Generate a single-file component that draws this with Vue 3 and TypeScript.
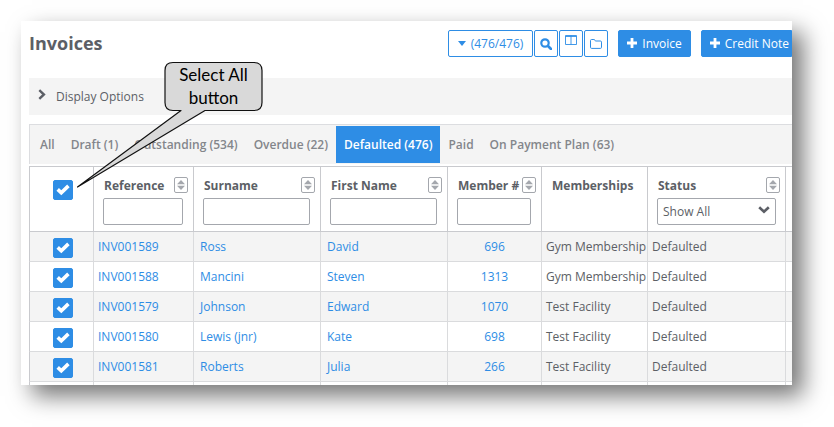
<script setup lang="ts">
import { reactive, ref } from 'vue'

interface Invoice {
  reference: string
  surname: string
  firstName: string
  member: string
  membership: string
  status: string
  selected: boolean
}

const tabs = ['All', 'Draft (1)', 'Outstanding (534)', 'Overdue (22)', 'Defaulted (476)', 'Paid', 'On Payment Plan (63)']
const activeTab = ref('Defaulted (476)')
const allSelected = ref(true)

const invoices = reactive<Invoice[]>([
  { reference: 'INV001589', surname: 'Ross', firstName: 'David', member: '696', membership: 'Gym Membership', status: 'Defaulted', selected: true },
  { reference: 'INV001588', surname: 'Mancini', firstName: 'Steven', member: '1313', membership: 'Gym Membership', status: 'Defaulted', selected: true },
  { reference: 'INV001579', surname: 'Johnson', firstName: 'Edward', member: '1070', membership: 'Test Facility', status: 'Defaulted', selected: true },
  { reference: 'INV001580', surname: 'Lewis (jnr)', firstName: 'Kate', member: '698', membership: 'Test Facility', status: 'Defaulted', selected: true },
  { reference: 'INV001581', surname: 'Roberts', firstName: 'Julia', member: '266', membership: 'Test Facility', status: 'Defaulted', selected: true },
])

const columns = [
  { label: 'Reference', filter: 'text' },
  { label: 'Surname', filter: 'text' },
  { label: 'First Name', filter: 'text' },
  { label: 'Member #', filter: 'text' },
  { label: 'Memberships', filter: 'none' },
  { label: 'Status', filter: 'select' },
]

function toggleAll(): void {
  invoices.forEach((i) => (i.selected = allSelected.value))
}
</script>

<template>
  <main class="card">
    <header class="top">
      <h1>Invoices</h1>
      <div class="tools">
        <button class="btn count" type="button">
          <svg width="8" height="5" viewBox="0 0 8 5"><path d="M0 0h8L4 5z" fill="currentColor" /></svg>
          (476/476)
        </button>
        <button class="btn icon" type="button" aria-label="Search">
          <svg width="12" height="12" viewBox="0 0 12 12" fill="none" stroke="currentColor">
            <circle cx="5" cy="5" r="3.7" stroke-width="2.2" />
            <path d="M8 8l3 3" stroke-width="2.6" stroke-linecap="round" />
          </svg>
        </button>
        <button class="btn icon columns" type="button" aria-label="Columns">
          <svg width="12" height="11" viewBox="0 0 12 11" fill="none" stroke="currentColor">
            <path d="M.5 .5h11v9H.5zM6 .5v9M.5 1.5h11" stroke-width=".9" />
          </svg>
        </button>
        <button class="btn icon" type="button" aria-label="Folder">
          <svg width="12" height="10" viewBox="0 0 12 10" fill="none" stroke="currentColor">
            <path d="M.5 1.6Q.5.5 1.6.5h2.3Q4.8.5 4.9 1.3 5 2 5.8 2h4.6q1.1 0 1.1 1.1v5.2q0 1.1-1.1 1.1H1.6Q.5 9.400 .5 8.300z" />
          </svg>
        </button>
        <button class="btn primary" type="button">
          <svg width="10" height="10" viewBox="0 0 10 10"><path d="M3.600 0h2.800v3.600H10v2.800H6.400V10H3.600V6.400H0V3.600h3.600z" fill="currentColor" /></svg>
          Invoice
        </button>
        <button class="btn primary last" type="button">
          <svg width="10" height="10" viewBox="0 0 10 10"><path d="M3.600 0h2.800v3.600H10v2.800H6.400V10H3.600V6.400H0V3.600h3.600z" fill="currentColor" /></svg>
          Credit Note
        </button>
      </div>
    </header>

    <button class="options" type="button">
      <svg width="8" height="12" viewBox="0 0 8 12" fill="none"><path d="M1.300 1.200L5.900 5.500 1.300 9.800" stroke="currentColor" stroke-width="2.400" /></svg>
      <span>Display Options</span>
    </button>

    <nav class="tabs">
      <a v-for="t in tabs" :key="t" href="#" :class="{ active: t === activeTab }" @click.prevent="activeTab = t">{{ t }}</a>
    </nav>

    <table>
      <colgroup>
        <col class="c-check" />
        <col class="c-ref" />
        <col class="c-name" />
        <col class="c-name" />
        <col class="c-member" />
        <col class="c-plan" />
        <col class="c-status" />
        <col />
      </colgroup>
      <thead>
        <tr>
          <th class="pick">
            <label class="tick">
              <input v-model="allSelected" type="checkbox" aria-label="Select all" @change="toggleAll" />
              <svg viewBox="0 0 20 20"><path d="M4.700 9.400l3.600 3.400L15.400 5.900" /></svg>
            </label>
          </th>
          <th v-for="c in columns" :key="c.label">
            <div class="head">
              <span>{{ c.label }}</span>
              <button v-if="c.filter !== 'none'" class="sort" type="button" :aria-label="'Sort by ' + c.label">
                <svg width="8" height="10" viewBox="0 0 8 10"><path d="M4 0l4 4.300H0zM0 5.700h8L4 10z" fill="currentColor" /></svg>
              </button>
            </div>
            <input v-if="c.filter === 'text'" class="field" type="text" :aria-label="'Filter ' + c.label" />
            <div v-if="c.filter === 'select'" class="pickone">
              <select class="field" aria-label="Filter status"><option>Show All</option></select>
              <svg width="12" height="8" viewBox="0 0 12 8" fill="none"><path d="M1.200 1.200L6 5.800l4.800-4.600" stroke="currentColor" stroke-width="2.600" /></svg>
            </div>
          </th>
          <th></th>
        </tr>
      </thead>
      <tbody>
        <tr v-for="i in invoices" :key="i.reference">
          <td class="pick">
            <label class="tick">
              <input v-model="i.selected" type="checkbox" :aria-label="'Select ' + i.reference" />
              <svg viewBox="0 0 20 20"><path d="M4.700 9.400l3.600 3.400L15.400 5.900" /></svg>
            </label>
          </td>
          <td><a href="#">{{ i.reference }}</a></td>
          <td class="name"><a href="#">{{ i.surname }}</a></td>
          <td class="name"><a href="#">{{ i.firstName }}</a></td>
          <td class="member"><a href="#">{{ i.member }}</a></td>
          <td>{{ i.membership }}</td>
          <td>{{ i.status }}</td>
          <td></td>
        </tr>
        <tr class="stub"><td v-for="n in 8" :key="n"></td></tr>
      </tbody>
    </table>

    <aside class="callout">
      <svg width="200" height="136" viewBox="0 0 200 136">
        <path
          d="M104 3.500h81q8 0 8 8v32q0 8-8 8H136L8.500 128 112 51.500H104q-8 0-8-8v-32q0-8 8-8z"
          fill="#d9d9d9" stroke="#111" stroke-width="1.200" stroke-linejoin="round"
        />
      </svg>
      <p>Select All<br />button</p>
    </aside>
  </main>
</template>

<style>
body {
  background: #fff;
}
</style>

<style scoped>
.card {
  position: relative;
  margin: 21px 42px 42px 21px;
  padding-left: 8px;
  overflow: hidden;
  background: #fff;
  box-shadow: 11px 11px 22px rgba(0, 0, 0, 0.54);
  color: #5c5f66;
  font: 12px/18px "Open Sans", sans-serif;
}
button,
input,
select {
  box-sizing: border-box;
  margin: 0;
  font: inherit;
  color: inherit;
}
a {
  color: #2e8de5;
  text-decoration: none;
}
.top {
  display: flex;
  justify-content: space-between;
  padding-top: 9px;
  height: 48px;
}
h1 {
  margin: 0;
  font-size: 18px;
  line-height: 26px;
  font-weight: 700;
}
.tools {
  display: flex;
  gap: 1px;
}
.btn {
  display: flex;
  align-items: center;
  justify-content: center;
  gap: 5px;
  height: 27px;
  padding: 0 9px;
  border: 1px solid #2e8de5;
  border-radius: 2px;
  background: #fff;
  color: #2e8de5;
  white-space: nowrap;
}
.icon {
  width: 24px;
  padding: 0;
}
.columns {
  align-items: flex-start;
  padding-top: 4px;
}
.primary {
  margin-left: 9px;
  padding: 0 8px;
  background: #2e8de5;
  color: #fff;
}
.primary svg {
  margin-bottom: 2px;
}
.last {
  padding-right: 2px;
  border-radius: 2px 0 0 2px;
}
.options {
  display: flex;
  align-items: center;
  gap: 10px;
  width: 100%;
  height: 37px;
  margin-bottom: 9px;
  padding: 0 9px;
  border: 0;
  background: #f4f4f4;
}
.options svg {
  margin-bottom: 4px;
}
.tabs {
  display: flex;
  margin-bottom: 2px;
  padding: 1px 0 1px 2px;
  border-top: 1px solid #dcdde0;
  border-left: 1px solid #dcdde0;
  background: #f4f4f4;
}
.tabs a {
  padding: 0 8px;
  line-height: 37px;
  font-weight: 600;
  color: #83868b;
  white-space: nowrap;
}
.tabs .active {
  background: #2e8de5;
  color: #fff;
}
table {
  width: 100%;
  table-layout: fixed;
  border-spacing: 0;
  border-top: 1px solid #c9cace;
}
.c-check { width: 65px; }
.c-ref { width: 100px; }
.c-name { width: 127px; }
.c-member { width: 94px; }
.c-plan { width: 106px; }
.c-status { width: 138px; }
th,
td {
  box-sizing: border-box;
  border-right: 1px solid #dadbdd;
  border-bottom: 1px solid #dadbdd;
  text-align: left;
}
th {
  height: 65px;
  padding: 0 9px;
  border-color: #c9cace;
  vertical-align: top;
}
th:first-child,
td:first-child {
  border-left: 1px solid #c9cace;
}
th:last-child,
td:last-child {
  padding: 0;
  border-right: 0;
}
td {
  height: 30px;
  padding: 0 4px;
  white-space: nowrap;
}
tbody tr:nth-child(odd) {
  background: #f4f4f4;
}
tbody .stub {
  background: #fff;
}
.stub td {
  height: 3px;
  border-bottom: 0;
}
.name {
  padding-left: 6px;
}
.member {
  text-align: center;
}
.pick {
  padding: 3px 0 0 3px;
}
th.pick {
  padding-top: 13px;
}
.tick {
  display: grid;
  width: 20px;
  height: 20px;
  margin: 0 auto;
}
.tick > * {
  grid-area: 1 / 1;
  width: 20px;
  height: 20px;
}
.tick input {
  appearance: none;
  border: 1px solid #2e8de5;
  border-radius: 2px;
  background: #fff;
}
.tick input:checked {
  background: #2e8de5;
}
.tick svg {
  fill: none;
  stroke: #fff;
  stroke-width: 3.6;
  pointer-events: none;
}
.head {
  display: flex;
  justify-content: space-between;
  height: 18px;
  margin: 10px -4px 3px 1px;
  white-space: nowrap;
}
.sort {
  display: grid;
  place-items: center;
  width: 14px;
  height: 16px;
  padding: 0;
  border: 1px solid #a4a7ad;
  border-radius: 2px;
  background: #fff;
  color: #a4a7ad;
}
.field {
  display: block;
  width: calc(100% - 1px);
  height: 27px;
  padding: 0 5px;
  border: 1px solid #a4a7ad;
  border-radius: 2px;
  background: #fff;
  font-weight: 400;
}
.pickone {
  display: grid;
  align-items: center;
}
.pickone > * {
  grid-area: 1 / 1;
}
.pickone .field {
  width: 100%;
  appearance: none;
}
.pickone svg {
  justify-self: end;
  margin: 0 6px 3px 0;
  pointer-events: none;
}
.callout {
  position: absolute;
  top: 38px;
  left: 48px;
  pointer-events: none;
}
.callout svg {
  display: block;
}
.callout p {
  position: absolute;
  top: 4px;
  left: 96px;
  width: 97px;
  margin: 0;
  color: #000;
  font: 17px/23px Lato, "Open Sans", sans-serif;
  text-align: center;
}
</style>
